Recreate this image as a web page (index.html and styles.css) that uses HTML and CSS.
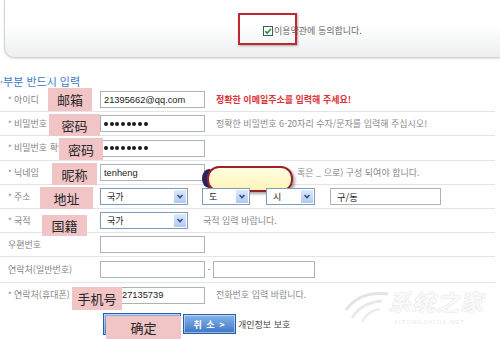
FILE: index.html
```html
<!DOCTYPE html>
<html lang="ko">
<head>
<meta charset="utf-8">
<title>회원가입</title>
<link rel="stylesheet" href="styles.css">
</head>
<body>
<div class="page">
  <div class="agree-panel">
    <div class="agree">
      <svg class="checkbox" width="10" height="10" viewBox="0 0 10 10"><rect x="0.5" y="0.5" width="9" height="9" fill="#fff" stroke="#3d5872"/><polyline points="2.2,5.2 4.2,7.2 7.9,2.8" fill="none" stroke="#2a9a35" stroke-width="1.7"/></svg>
      <span class="agree-text">이용약관에 동의합니다.</span>
    </div>
    <div class="mark-box"></div>
  </div>

  <h2 class="section-title">·부분 반드시 입력</h2>

  <div class="form">
    <div class="row">
      <div class="label"><span class="req">*</span>아이디</div>
      <div class="field">
        <div class="input">21395662@qq.com</div>
        <span class="hint hint-red">정확한 이메일주소를 입력해 주세요!</span>
      </div>
      <span class="tag tag-mail">邮箱</span>
    </div>

    <div class="row">
      <div class="label"><span class="req">*</span>비밀번호</div>
      <div class="field">
        <div class="input"><span class="dots"><i></i><i></i><i></i><i></i><i></i><i></i><i></i><i></i></span></div>
        <span class="hint">정확한 비밀번호 6-20자리 수자/문자를 입력해 주십시오!</span>
      </div>
      <span class="tag tag-pw1">密码</span>
    </div>

    <div class="row">
      <div class="label"><span class="req">*</span>비밀번호 확인</div>
      <div class="field">
        <div class="input"><span class="dots"><i></i><i></i><i></i><i></i><i></i><i></i><i></i><i></i></span></div>
      </div>
      <span class="tag tag-pw2">密码</span>
    </div>

    <div class="row">
      <div class="label"><span class="req">*</span>닉네임</div>
      <div class="field">
        <div class="input">tenheng</div>
        <span class="hint hint-nick">혹은 _ 으로) 구성 되여야 합니다.</span>
      </div>
      <span class="tip-shadow"></span>
      <span class="tip"></span>
      <span class="tag tag-nick">昵称</span>
    </div>

    <div class="row">
      <div class="label"><span class="req">*</span>주소</div>
      <div class="field">
        <div class="select sel-country"><span>국가</span><svg class="arrow" width="12" height="13" viewBox="0 0 12 13"><defs><linearGradient id="ag" x1="0" y1="0" x2="0" y2="1"><stop offset="0" stop-color="#dce8fb"/><stop offset="1" stop-color="#b2c9ee"/></linearGradient></defs><rect x="0" y="0" width="12" height="13" fill="url(#ag)"/><polyline points="3.5,5 6,7.5 8.5,5" fill="none" stroke="#2c4f8c" stroke-width="1.6"/></svg></div>
        <div class="select sel-do"><span>도</span><svg class="arrow" width="12" height="13" viewBox="0 0 12 13"><rect x="0" y="0" width="12" height="13" fill="url(#ag)"/><polyline points="3.5,5 6,7.5 8.5,5" fill="none" stroke="#2c4f8c" stroke-width="1.6"/></svg></div>
        <div class="select sel-si"><span>시</span><svg class="arrow" width="12" height="13" viewBox="0 0 12 13"><rect x="0" y="0" width="12" height="13" fill="url(#ag)"/><polyline points="3.5,5 6,7.5 8.5,5" fill="none" stroke="#2c4f8c" stroke-width="1.6"/></svg></div>
        <div class="input input-dong">구/동</div>
      </div>
      <span class="tag tag-addr">地址</span>
    </div>

    <div class="row">
      <div class="label"><span class="req">*</span>국적</div>
      <div class="field">
        <div class="select sel-country"><span>국가</span><svg class="arrow" width="12" height="13" viewBox="0 0 12 13"><rect x="0" y="0" width="12" height="13" fill="url(#ag)"/><polyline points="3.5,5 6,7.5 8.5,5" fill="none" stroke="#2c4f8c" stroke-width="1.6"/></svg></div>
        <span class="hint hint-nation">국적 입력 바랍니다.</span>
      </div>
      <span class="tag tag-nation">国籍</span>
    </div>

    <div class="row">
      <div class="label label-plain">우편번호</div>
      <div class="field">
        <div class="input"></div>
      </div>
    </div>

    <div class="row">
      <div class="label label-plain">연락처(일반번호)</div>
      <div class="field">
        <div class="input"></div>
        <span class="dash">-</span>
        <div class="input input-tel2"></div>
      </div>
    </div>

    <div class="row row-last">
      <div class="label"><span class="req">*</span>연락처(휴대폰)</div>
      <div class="field">
        <div class="input input-phone">27135739</div>
        <span class="hint">전화번호 입력 바랍니다.</span>
      </div>
      <span class="tag tag-phone">手机号</span>
    </div>

    <div class="row row-buttons">
      <div class="label label-plain"></div>
      <div class="field field-buttons">
        <button class="btn btn-ok" aria-label="확인"></button>
        <button class="btn btn-cancel">취 소 &gt;</button>
        <span class="privacy">개인정보 보호</span>
      </div>
      <span class="tag tag-ok">确定</span>
    </div>
  </div>

  <div class="watermark">
    <svg class="wm-icon" width="50" height="36" viewBox="0 0 50 36"><path d="M4 22 C14 8 30 4 46 6" fill="none" stroke="#dcdcdc" stroke-width="3"/><path d="M10 30 C16 20 26 14 40 13" fill="none" stroke="#e2e2e2" stroke-width="3"/><path d="M20 34 C24 26 30 22 38 21" fill="none" stroke="#e6e6e6" stroke-width="2.5"/></svg>
    <div class="wm-text">
      <span class="wm-main" lang="zh-CN">系统之家</span>
      <span class="wm-sub">XITONGZHIJIA.NET</span>
    </div>
  </div>
</div>
</body>
</html>
```
FILE: styles.css
```css
* { box-sizing: border-box; }
html, body { margin: 0; padding: 0; }
body {
  width: 500px;
  height: 339px;
  overflow: hidden;
  background: #fff;
  font-family: "Noto Sans CJK KR", "Noto Sans", sans-serif;
  color: #808080;
}
.page { position: relative; width: 500px; height: 339px; }

/* agreement panel */
.agree-panel {
  position: relative;
  margin-left: 4px;
  height: 58px;
  border: 1px solid #d4d4d4;
  border-top: 0;
  border-right: 0;
  border-bottom-left-radius: 10px;
  background: linear-gradient(#ffffff 0%, #ffffff 45%, #eceef0 100%);
  box-shadow: 0 1px 2px rgba(0,0,0,.12);
  padding: 25px 0 0 258px;
}
.agree { display: flex; align-items: center; height: 12px; gap: 1px; }
.checkbox { display: block; flex: none; }
.agree-text { font-size: 9px; line-height: 12px; color: #6a6a6a; white-space: nowrap; }
.mark-box {
  position: absolute;
  left: 233px;
  top: 13px;
  width: 59px;
  height: 32px;
  border: 2px solid #c0272e;
  box-shadow: 1px 1px 2px rgba(0,0,0,.3);
}

/* section title */
.section-title {
  margin: 16px 0 0 0;
  height: 14px;
  font-size: 11px;
  line-height: 14px;
  font-weight: normal;
  color: #3b7bc6;
  white-space: nowrap;
}

/* form */
.form {
  display: grid;
  width: 495px;
  grid-template-rows: 24px 24px 25px 24px 24px 24px 24px 26px 24px 32px;
}
.row {
  position: relative;
  display: grid;
  grid-template-columns: 100px 1fr;
  align-items: center;
  border-bottom: 1px solid #e4e4e4;
}
.row-last, .row-buttons { border-bottom: 0; }
.label {
  display: flex;
  align-items: center;
  padding-left: 8px;
  font-size: 9px;
  line-height: 12px;
  color: #858585;
  white-space: nowrap;
}
.req { width: 6px; color: #777; font-size: 8px; }
.field { display: flex; align-items: center; white-space: nowrap; }

.input {
  display: flex;
  align-items: center;
  width: 105px;
  height: 17px;
  flex: none;
  padding: 0 3px;
  border: 1px solid #aab2bb;
  background: #fff;
  font-family: "Liberation Sans", Arial, sans-serif;
  font-size: 9.3px;
  color: #222;
}
.input-phone { padding-left: 21px; }
.input-dong { width: 111px; font-family: "Noto Sans CJK KR", sans-serif; padding-left: 6px; }
.input-tel2 { width: 102px; }
.dash { width: 8px; text-align: center; font-size: 9px; color: #666; }

.dots { display: flex; gap: 1.7px; }
.dots i { display: block; width: 4px; height: 4px; border-radius: 50%; background: #1a1a1a; }

.hint { margin-left: 11px; font-size: 9px; line-height: 12px; color: #8a8a8a; }
.hint-red { color: #d8343a; font-weight: bold; }
.hint-nick { margin-left: 92px; }
.hint-nation { margin-left: 15px; }

.select {
  display: flex;
  align-items: center;
  justify-content: space-between;
  height: 17px;
  flex: none;
  padding-left: 6px;
  padding-right: 1px;
  border: 1px solid #7f9db9;
  background: #fff;
  font-size: 9px;
  color: #222;
}
.arrow { display: block; flex: none; }
.sel-country { width: 88px; }
.sel-do { width: 48px; margin-left: 14px; }
.sel-si { width: 49px; margin-left: 16px; }
.sel-si + .input-dong { margin-left: 15px; }

/* buttons */
.row-buttons { align-items: start; }
.field-buttons { padding-top: 6px; }
.btn {
  height: 20px;
  padding: 0;
  border: 1px solid #2b5ea6;
  background: linear-gradient(#86b4ea, #3f77c6);
  box-shadow: inset 0 0 0 1px rgba(255,255,255,.45);
  color: #fff;
  font-family: "Noto Sans CJK KR", sans-serif;
  font-size: 9px;
  font-weight: bold;
  letter-spacing: 1px;
}
.btn-ok { width: 78px; height: 22px; margin-left: 3px; }
.btn-cancel { width: 53px; margin-left: 2px; }
.privacy { margin-left: 2px; font-size: 9px; color: #444; }

/* annotation tags */
.tag {
  position: absolute;
  display: flex;
  align-items: center;
  justify-content: center;
  background: #f1c4c6;
  color: #262626;
  font-family: "Noto Sans CJK SC", sans-serif;
  font-size: 13px;
  white-space: nowrap;
}
.tag-mail { left: 48px; top: 0; width: 44px; height: 23px; }
.tag-pw1 { left: 49px; top: 2px; width: 51px; height: 22px; }
.tag-pw2 { left: 59px; top: 2px; width: 44px; height: 22px; }
.tag-nick { left: 52px; top: 2px; width: 45px; height: 22px; }
.tag-addr { left: 40px; top: 2px; width: 53px; height: 22px; }
.tag-nation { left: 42px; top: 6px; width: 45px; height: 21px; }
.tag-phone { left: 72px; top: 4px; width: 50px; height: 23px; }
.tag-ok { left: 106px; top: 9px; width: 75px; height: 23px; }

/* tooltip */
.tip-shadow {
  position: absolute;
  left: 202px;
  top: 8px;
  width: 14px;
  height: 19px;
  border-radius: 50%;
  background: #2d2160;
}
.tip {
  position: absolute;
  left: 207px;
  top: 5px;
  width: 86px;
  height: 26px;
  border: 2px solid #9b1f2c;
  border-radius: 12px;
  background: linear-gradient(#fffde0, #fff4b8);
  box-shadow: 2px 2px 3px rgba(0,0,0,.35);
}

/* watermark */
.watermark {
  position: absolute;
  left: 342px;
  top: 284px;
  display: flex;
  align-items: flex-start;
  opacity: .75;
  pointer-events: none;
}
.wm-icon { display: block; margin-top: 4px; }
.wm-text { display: flex; flex-direction: column; margin-left: -4px; }
.wm-main {
  font-family: "Noto Sans CJK SC", sans-serif;
  font-size: 23px;
  line-height: 34px;
  font-weight: bold;
  font-style: italic;
  color: #f8f8f8;
  text-shadow: 0 0 1px #cfcfcf, 0 0 1px #cfcfcf;
  letter-spacing: 1px;
}
.wm-sub {
  font-family: "Liberation Sans", sans-serif;
  font-size: 6px;
  line-height: 8px;
  color: #e2e2e2;
  letter-spacing: 1px;
  margin-left: 6px;
}
```
